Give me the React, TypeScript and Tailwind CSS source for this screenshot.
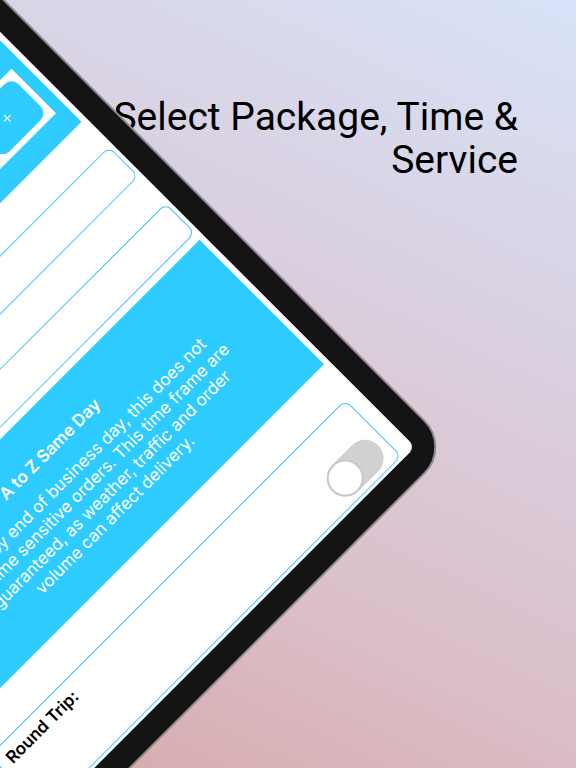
import type { ReactNode } from "react";
import { Plus } from "lucide-react";

function Tablet({ children }: { children: ReactNode }) {
  return (
    <div className="absolute right-[calc(100%-452px)] bottom-[calc(100%-447px)] h-[800px] w-[588px] origin-bottom-right -rotate-45 rounded-[38px] border-2 border-[#8d888b] bg-[#141414] p-6">
      <div className="flex h-full flex-col justify-end overflow-hidden rounded-lg bg-white pb-[3px] font-[Inter,sans-serif] text-[17px] leading-5">
        {children}
      </div>
    </div>
  );
}

function QuantityPanel() {
  return (
    <section className="mx-1.5 bg-[#2ecbff] px-3 pt-12 pb-6">
      <div className="flex justify-end bg-white p-1.5">
        <button
          type="button"
          aria-label="Add package"
          className="flex h-[51px] w-16 items-center justify-center rounded-[10px] bg-[#2ecbff] text-white"
        >
          <Plus size={14} strokeWidth={2} />
        </button>
      </div>
    </section>
  );
}

function Field({ name }: { name: string }) {
  return (
    <input
      type="text"
      aria-label={name}
      className="mx-1 h-[42px] rounded-lg border border-[#3fc6f2] bg-white px-3"
    />
  );
}

function ServicePanel() {
  return (
    <section className="mx-1.5 mt-2 h-44 bg-[#2ecbff] pt-8 pl-4 text-center text-white">
      <h2 className="font-semibold">A to Z Same Day</h2>
      <p className="mt-3">
        Delivery by end of business day, this does not
        <br />
        include time sensitive orders. This time frame are
        <br />
        not guaranteed, as weather, traffic and order
        <br />
        volume can affect delivery.
      </p>
    </section>
  );
}

function RoundTrip() {
  return (
    <div className="mx-4 mt-10 flex h-20 justify-between rounded-lg border border-[#3fc6f2] px-2">
      <label htmlFor="round-trip" className="pt-1.5 pl-0.5 font-semibold text-black">
        Round Trip:
      </label>
      <input
        id="round-trip"
        type="checkbox"
        role="switch"
        className="mt-9 h-[37px] w-[65px] appearance-none rounded-full bg-[#d1d1d4] before:block before:size-[37px] before:rounded-full before:border-2 before:border-[#c8c8ca] before:bg-white checked:before:ml-7"
      />
    </div>
  );
}

export default function App() {
  return (
    <main className="relative min-h-screen overflow-hidden bg-[linear-gradient(205deg,#d8e2f8_0%,#dacddc_42%,#dbbfc8_70%,#d7a8aa_100%)]">
      <h1 className="px-[58px] pt-24 text-right font-[Roboto,sans-serif] text-[39px] leading-[43px] text-black">
        Select Package, Time &amp; Service
      </h1>
      <div className="absolute top-0 left-0 w-full">
        <div className="relative h-[768px]">
          <Tablet>
            <QuantityPanel />
            <div className="mt-[37px] flex flex-col gap-[38px]">
              <Field name="Pickup time" />
              <Field name="Service" />
            </div>
            <ServicePanel />
            <RoundTrip />
          </Tablet>
        </div>
      </div>
    </main>
  );
}
